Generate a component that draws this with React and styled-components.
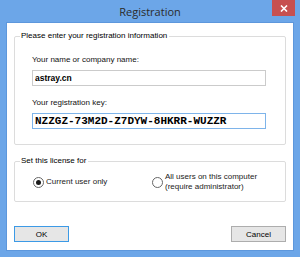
import React from "react";
import styled, { createGlobalStyle } from "styled-components";

const GlobalStyle = createGlobalStyle`
  html, body {
    margin: 0;
    padding: 0;
    background: #6ca6e8;
  }
`;

export default function App() {
  return (
    <>
      <GlobalStyle />
      <Window>
        <TitleBar>
          <Title>Registration</Title>
          <CloseButton aria-label="Close">
            <svg width="8" height="7" viewBox="0 0 8 7">
              <path d="M1 0.5 L7 6.5 M7 0.5 L1 6.5" stroke="#fff" strokeWidth="1.6" />
            </svg>
          </CloseButton>
        </TitleBar>
        <Client>
          <Group $pt={12} $pb={15}>
            <Legend>Please enter your registration information</Legend>
            <Label>Your name or company name:</Label>
            <TextInput defaultValue="astray.cn" readOnly />
            <Label $top={11}>Your registration key:</Label>
            <TextInput $mono $focused defaultValue="NZZGZ-73M2D-Z7DYW-8HKRR-WUZZR" readOnly />
          </Group>
          <Group $top={10} $pt={5} $pb={9}>
            <Legend>Set this license for</Legend>
            <RadioRow>
              <RadioOption $w={119}>
                <Radio $checked />
                <span>Current user only</span>
              </RadioOption>
              <RadioOption>
                <Radio />
                <span>
                  All users on this computer
                  <br />
                  (require administrator)
                </span>
              </RadioOption>
            </RadioRow>
          </Group>
          <Buttons>
            <Button $default>OK</Button>
            <Button>Cancel</Button>
          </Buttons>
        </Client>
      </Window>
    </>
  );
}

const Window = styled.div`
  width: 300px;
  height: 257px;
  display: flex;
  flex-direction: column;
  background: #6ca6e8;
  font-family: "Liberation Sans", Tahoma, sans-serif;
  font-size: 8px;
  color: #000;
`;

const TitleBar = styled.div`
  position: relative;
  height: 22px;
  flex-shrink: 0;
  display: flex;
  align-items: center;
  justify-content: center;
`;

const Title = styled.div`
  font-family: "Open Sans", "Noto Sans", sans-serif;
  font-size: 11px;
  color: #2b2b2b;
  margin-top: 1px;
`;

const CloseButton = styled.div`
  position: absolute;
  top: 0;
  right: 5px;
  width: 23px;
  height: 16px;
  background: #c75050;
  display: flex;
  align-items: center;
  justify-content: center;
`;

const Client = styled.div`
  flex: 1;
  margin: 0 6px 6px 6px;
  background: #fff;
  border: 1px solid #5d97dc;
  padding: 7px 7px 0 7px;
  display: flex;
  flex-direction: column;
`;

const Group = styled.fieldset`
  margin: ${(p) => p.$top || 0}px 0 0 0;
  padding: ${(p) => p.$pt}px 18px ${(p) => p.$pb}px 17px;
  border: 1px solid #dcdcdc;
  border-radius: 2px;
  min-width: 0;
  display: flex;
  flex-direction: column;
  align-items: flex-start;
`;

const Legend = styled.legend`
  padding: 0 2px 0 1px;
  margin-left: -12px;
  line-height: 12px;
  color: #000;
`;

const Label = styled.div`
  line-height: 12px;
  margin-top: ${(p) => p.$top || 0}px;
  margin-bottom: 4px;
  color: #111;
`;

const TextInput = styled.input`
  width: 234px;
  height: 16px;
  box-sizing: border-box;
  border: 1px solid ${(p) => (p.$focused ? "#7eb4ea" : "#cbcbcb")};
  padding: 0 2px;
  margin: 0;
  outline: none;
  font-family: ${(p) => (p.$mono ? '"Liberation Mono", "Courier New", monospace' : '"Liberation Sans", Tahoma, sans-serif')};
  font-size: ${(p) => (p.$mono ? "11px" : "8.5px")};
  font-weight: bold;
  color: #000;
  background: #fff;
`;

const RadioRow = styled.div`
  display: flex;
  align-items: center;
  padding-left: 1px;
`;

const RadioOption = styled.label`
  display: flex;
  align-items: center;
  gap: 2px;
  width: ${(p) => (p.$w ? `${p.$w}px` : "auto")};
  line-height: 10px;
  color: #222;
`;

const Radio = styled.span`
  width: 11px;
  height: 11px;
  box-sizing: border-box;
  border-radius: 50%;
  border: 1px solid #666;
  background: #fff;
  display: flex;
  align-items: center;
  justify-content: center;
  flex-shrink: 0;

  &::after {
    content: "";
    display: ${(p) => (p.$checked ? "block" : "none")};
    width: 5px;
    height: 5px;
    border-radius: 50%;
    background: #1a1a1a;
  }
`;

const Buttons = styled.div`
  display: flex;
  justify-content: space-between;
  margin-top: auto;
  padding-bottom: 8px;
`;

const Button = styled.div`
  width: 55px;
  height: 16px;
  box-sizing: border-box;
  border: 1px solid ${(p) => (p.$default ? "#3c9ae6" : "#adadad")};
  background: #e6e6e6;
  display: flex;
  align-items: center;
  justify-content: center;
  font-size: 8px;
  color: #000;
`;
